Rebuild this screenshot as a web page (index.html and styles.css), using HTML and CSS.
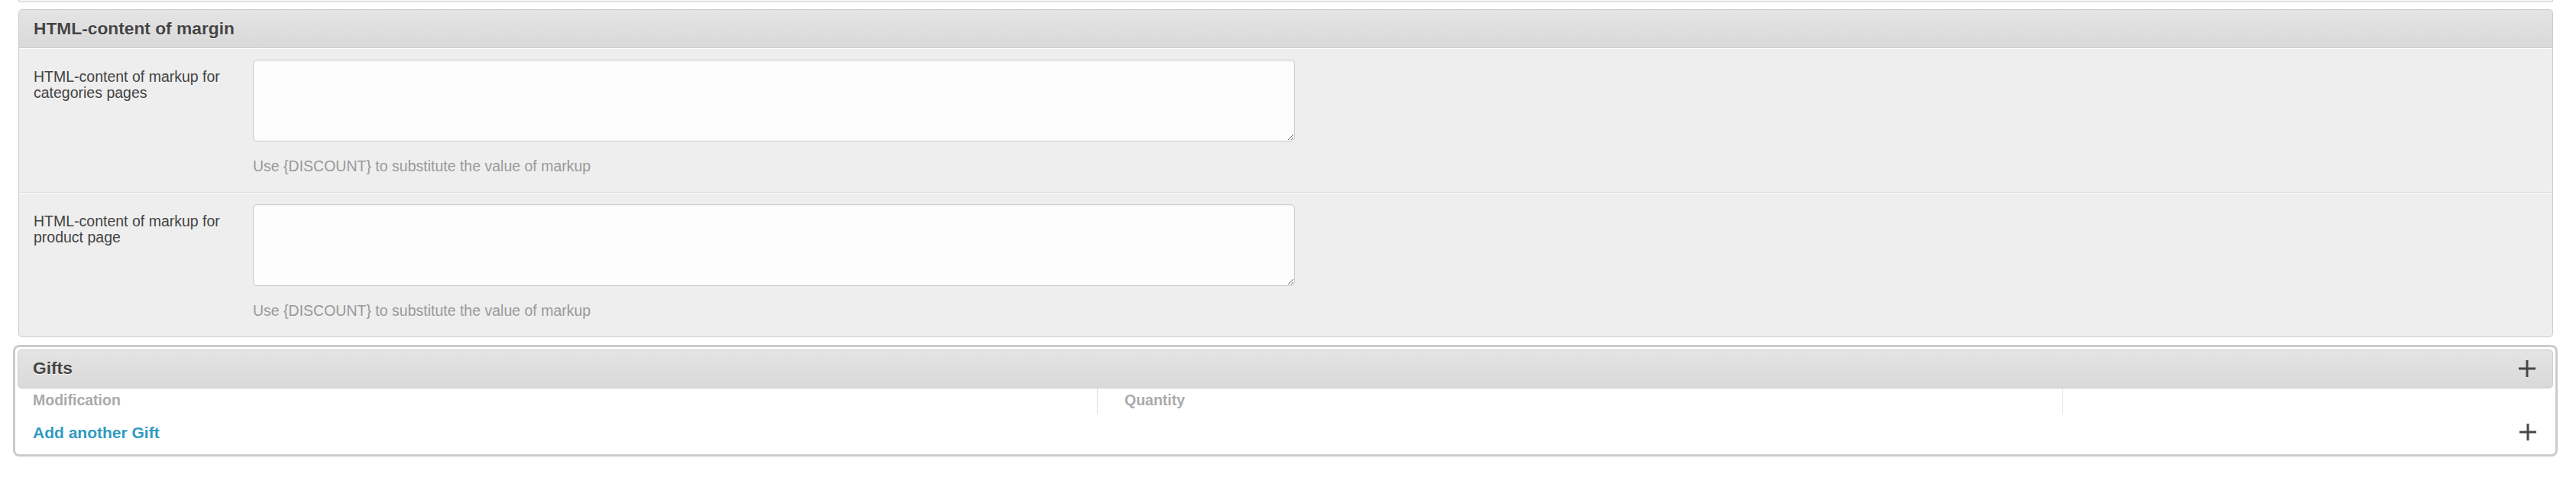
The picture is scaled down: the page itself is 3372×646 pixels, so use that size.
FILE: index.html
```html
<!DOCTYPE html>
<html lang="en">
<head>
<meta charset="utf-8">
<title>HTML-content of margin</title>
<link rel="stylesheet" href="styles.css">
</head>
<body>
<div class="page">
  <div class="prev-module"></div>

  <fieldset class="module">
    <h2 class="module-title">HTML-content of margin</h2>
    <div class="row">
      <label class="row-label" for="cat">HTML-content of markup for categories pages</label>
      <div class="row-field">
        <textarea id="cat" class="field-area"></textarea>
        <p class="help">Use {DISCOUNT} to substitute the value of markup</p>
      </div>
    </div>
    <div class="row">
      <label class="row-label" for="prod">HTML-content of markup for product page</label>
      <div class="row-field">
        <textarea id="prod" class="field-area"></textarea>
        <p class="help">Use {DISCOUNT} to substitute the value of markup</p>
      </div>
    </div>
  </fieldset>

  <div class="group">
    <div class="group-title">
      <h2 class="group-name">Gifts</h2>
      <span class="plus" aria-label="Add">
        <svg width="22" height="22" viewBox="0 0 22 22"><rect x="0" y="9.5" width="22" height="3" fill="#474747"/><rect x="9.5" y="0" width="3" height="22" fill="#474747"/></svg>
      </span>
    </div>
    <div class="cols">
      <div class="col col-mod">Modification</div>
      <div class="col col-qty">Quantity</div>
      <div class="col col-del"></div>
    </div>
    <div class="add-row">
      <a class="add-link" href="#">Add another Gift</a>
      <span class="plus" aria-label="Add">
        <svg width="22" height="22" viewBox="0 0 22 22"><rect x="0" y="9.5" width="22" height="3" fill="#474747"/><rect x="9.5" y="0" width="3" height="22" fill="#474747"/></svg>
      </span>
    </div>
  </div>
</div>
</body>
</html>
```

FILE: styles.css
```css
* { box-sizing: border-box; }

html, body {
  margin: 0;
  padding: 0;
  background: #fff;
  font-family: "Liberation Sans", Arial, Helvetica, sans-serif;
  color: #444;
}

.page {
  display: flex;
  flex-direction: column;
}

.prev-module {
  height: 3px;
  margin: 0 30px 0 24px;
  background: #f6f6f6;
  border: 1px solid #ccc;
  border-top: 0;
  border-radius: 0 0 5px 5px;
}

.module {
  margin: 9px 30px 0 24px;
  padding: 0;
  min-width: 0;
  border: 1px solid #ccc;
  border-radius: 5px;
  background: #eee;
  overflow: hidden;
}

.module-title,
.group-name {
  margin: 0;
  font-size: 22.75px;
  font-weight: bold;
  color: #444;
  text-shadow: 0 1px 0 #fff;
}

.module-title {
  height: 50px;
  line-height: 49px;
  padding-left: 19px;
  background: linear-gradient(#e4e4e4, #d9d9d9);
  border-bottom: 1px solid #ccc;
}

.row {
  display: flex;
  align-items: flex-start;
  padding: 14px 0 23px 19px;
  border-top: 1px solid #fff;
  border-bottom: 1px solid #ddd;
}

.row:last-child {
  border-bottom: 0;
}

.row-label {
  flex: 0 0 287px;
  padding: 12px 30px 0 0;
  font-size: 19.5px;
  line-height: 21px;
  color: #444;
}

.row-field {
  display: flex;
  flex-direction: column;
}

.field-area {
  display: block;
  width: 1364px;
  height: 107px;
  margin: 0;
  border: 1px solid #ccc;
  border-radius: 5px;
  background: #fdfdfd;
  box-shadow: inset 0 1px 3px #eee;
  font-family: "Liberation Sans", Arial, sans-serif;
  font-size: 19.5px;
}

.help {
  margin: 22px 0 0;
  font-size: 19.5px;
  line-height: 21px;
  color: #999;
}

.group {
  margin: 10px 24px 0 17px;
  padding: 3px;
  border: 3px solid #ccc;
  border-radius: 8px;
  background: #fff;
}

.group-title {
  display: flex;
  align-items: center;
  justify-content: space-between;
  height: 51px;
  padding: 0 22px 2px 19px;
  border: 1px solid #ccc;
  border-radius: 5px;
  background: linear-gradient(#e4e4e4, #d9d9d9);
}

.plus {
  display: flex;
  width: 22px;
  height: 22px;
}

.cols {
  display: grid;
  grid-template-columns: 1413px 1263px 1fr;
  height: 33px;
}

.col {
  padding-top: 5px;
  font-size: 19.5px;
  line-height: 21px;
  font-weight: bold;
  color: #aaa;
}

.col-mod {
  padding-left: 20px;
}

.col-qty {
  padding-left: 35px;
  border-left: 1px solid #e4e4e4;
}

.col-del {
  border-left: 1px solid #e4e4e4;
}

.add-row {
  display: flex;
  align-items: center;
  justify-content: space-between;
  height: 50px;
  padding: 0 22px 2px 20px;
}

.add-link {
  font-size: 21px;
  line-height: 23px;
  font-weight: bold;
  color: #309bbf;
  text-decoration: none;
}
```
